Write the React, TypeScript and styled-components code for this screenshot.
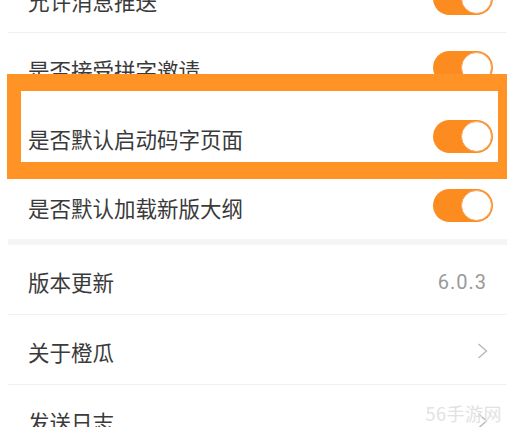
import styled, { createGlobalStyle } from "styled-components";

const GlobalStyle = createGlobalStyle`
  html, body {
    margin: 0;
    padding: 0;
    background: #ffffff;
    overflow: hidden;
  }
  #root {
    width: 507px;
    height: 427px;
  }
`;

// line: whether a divider sits above the row (the ones under the highlight are not shown)
const toggleRows = [
  { label: "允许消息推送", line: false },
  { label: "是否接受拼字邀请", line: true },
  { label: "是否默认启动码字页面", line: false },
  { label: "是否默认加载新版大纲", line: false },
];

export default function App() {
  return (
    <Page>
      <GlobalStyle />
      <Group>
        {toggleRows.map((item) => (
          <div key={item.label}>
            <Divider $show={item.line} />
            <Row>
              <Label>{item.label}</Label>
              <Switch>
                <Knob />
              </Switch>
            </Row>
          </div>
        ))}
      </Group>
      <Band />
      <Group>
        <Row $tall>
          <Label>版本更新</Label>
          <Version>6.0.3</Version>
        </Row>
        <Divider $show />
        <Row $tall>
          <Label>关于橙瓜</Label>
          <Chevron />
        </Row>
        <Divider $show />
        <Row $tall>
          <Label>发送日志</Label>
          <Chevron />
        </Row>
      </Group>
      <Highlight />
      <Watermark>56手游网</Watermark>
    </Page>
  );
}

function Chevron() {
  return (
    <ArrowBox>
      <svg width="11" height="16" viewBox="0 0 11 16">
        <polyline
          points="1.5,1 9.5,8 1.5,15"
          fill="none"
          stroke="#b8b8b8"
          strokeWidth="1.4"
        />
      </svg>
    </ArrowBox>
  );
}

const Page = styled.div`
  position: relative;
  width: 507px;
  height: 427px;
  overflow: hidden;
  font-family: "Noto Sans CJK SC", "Noto Sans", sans-serif;
`;

const Group = styled.div`
  display: flex;
  flex-direction: column;
  &:first-of-type {
    margin-top: -37px;
  }
`;

const Row = styled.div<{ $tall?: boolean }>`
  height: ${(p) => (p.$tall ? "69px" : "68px")};
  display: flex;
  align-items: center;
  justify-content: space-between;
  padding: 0 14px 0 28px;
  box-sizing: border-box;
`;

const Label = styled.span`
  font-size: 21.5px;
  color: #3a3a3a;
  margin-top: 4px;
`;

const Divider = styled.div<{ $show?: boolean }>`
  height: 1px;
  margin-left: 8px;
  background: ${(p) => (p.$show ? "#f1f1f1" : "transparent")};
`;

const Band = styled.div`
  height: 6px;
  margin-left: 8px;
  background: #f5f5f5;
`;

const Switch = styled.div`
  width: 60px;
  height: 33px;
  border-radius: 17px;
  background: #fd8c20;
  display: flex;
  align-items: center;
  justify-content: flex-end;
  padding: 1px;
  box-sizing: border-box;
`;

const Knob = styled.div`
  width: 31px;
  height: 31px;
  border-radius: 50%;
  background: #ffffff;
  border: 1.5px solid #f7a45a;
  box-sizing: border-box;
`;

const Version = styled.span`
  font-family: Roboto, "Liberation Sans", sans-serif;
  font-size: 20px;
  letter-spacing: 1px;
  color: #9a9a9a;
  margin-right: 6px;
  margin-top: 4px;
`;

const ArrowBox = styled.div`
  display: flex;
  margin-right: 5px;
  margin-top: 2px;
`;

const Highlight = styled.div`
  position: absolute;
  left: 7px;
  top: 74px;
  width: 520px;
  height: 105px;
  box-sizing: border-box;
  border-style: solid;
  border-color: #ff9326;
  border-width: 17px 0 17px 14px;
  pointer-events: none;
  &::after {
    content: "";
    position: absolute;
    top: -17px;
    bottom: -17px;
    left: 477px;
    width: 30px;
    background: #ff9326;
  }
`;

const Watermark = styled.div`
  position: absolute;
  right: 5px;
  top: 400px;
  font-family: "Noto Sans CJK SC", sans-serif;
  font-size: 18px;
  color: #e2e2e2;
  letter-spacing: 0.5px;
`;
